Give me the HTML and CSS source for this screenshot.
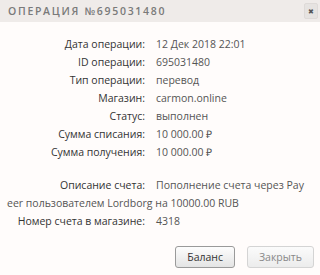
FILE: index.html
```html
<!DOCTYPE html>
<html lang="ru">
<head>
  <meta charset="UTF-8">
  <title>Операция №695031480</title>
  <link rel="stylesheet" href="styles.css">
</head>
<body>

  <div class="dialog">
    <div class="dialog-head">
      <span class="dialog-title">Операция №695031480</span>
      <span class="close-btn">&#10006;</span>
    </div>

    <div class="dialog-body">
      <div class="row"><span class="label">Дата операции:</span><span class="value">12 Дек 2018 22:01</span></div>
      <div class="row"><span class="label">ID операции:</span><span class="value">695031480</span></div>
      <div class="row"><span class="label">Тип операции:</span><span class="value">перевод</span></div>
      <div class="row"><span class="label">Магазин:</span><span class="value">carmon.online</span></div>
      <div class="row"><span class="label">Статус:</span><span class="value">выполнен</span></div>
      <div class="row"><span class="label">Сумма списания:</span><span class="value">10 000.00 &#8381;</span></div>
      <div class="row"><span class="label">Сумма получения:</span><span class="value">10 000.00 &#8381;</span></div>

      <div class="row spaced"><span class="label">Описание счета:</span><span class="value">Пополнение счета через Payeer пользователем Lordborg на 10000.00 RUB</span></div>
      <div class="row"><span class="label">Номер счета в магазине:</span><span class="value">4318</span></div>
    </div>

    <div class="dialog-foot">
      <button class="btn">Баланс</button>
      <button class="btn btn-light">Закрыть</button>
    </div>
  </div>

</body>
</html>
```

FILE: styles.css
```css
body {
  margin: 0;
  font-family: 'Open Sans', sans-serif;
  background-color: #fffcfb;
  width: 320px;
  height: 275px;
  overflow: hidden;
}

.dialog-head {
  display: flex;
  align-items: center;
  justify-content: space-between;
  height: 22px;
  padding: 0 2px 0 8px;
  background-color: #efebe9;
}

.dialog-title {
  font-size: 10.5px;
  font-weight: 600;
  letter-spacing: 1.7px;
  text-transform: uppercase;
  color: #7a7a7a;
}

.close-btn {
  display: flex;
  align-items: center;
  justify-content: center;
  width: 12px;
  height: 14px;
  font-size: 7px;
  color: #555;
  background-color: #e6e3e1;
  border: 1px solid #dedad8;
  border-radius: 2px;
}

.dialog-body {
  padding: 13px 14px 0 7px;
  font-size: 10.5px;
  line-height: 18px;
}

.row {
  word-break: break-all;
}

.row.spaced {
  margin-top: 15px;
}

.label {
  display: inline-block;
  width: 138px;
  text-align: right;
  color: #333;
}

.value {
  margin-left: 11px;
  color: #555;
}

.dialog-foot {
  display: flex;
  justify-content: flex-end;
  gap: 12px;
  padding: 16px 6px 0;
}

.btn {
  height: 22px;
  padding: 0 11px;
  font-family: 'Open Sans', sans-serif;
  font-size: 10.5px;
  color: #333;
  background: linear-gradient(#fdfdfd, #e4e4e4);
  border: 1px solid #9a9a9a;
  border-radius: 3px;
}

.btn-light {
  color: #888;
  border-color: #d4d4d4;
  background: linear-gradient(#fbfbfb, #ececec);
}
```
